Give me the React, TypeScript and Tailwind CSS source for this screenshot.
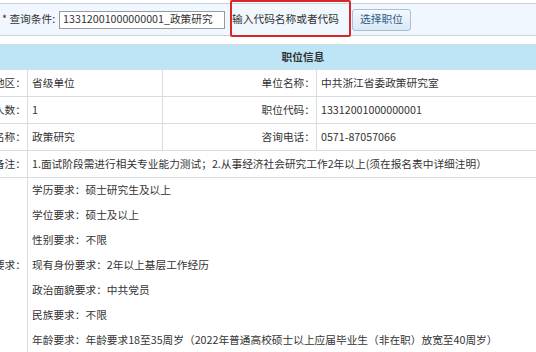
import React from "react"

const font = { fontFamily: '"Noto Sans CJK SC", "Noto Sans", sans-serif' }

const REQUIREMENTS = [
  "学历要求：硕士研究生及以上",
  "学位要求：硕士及以上",
  "性别要求：不限",
  "现有身份要求：2年以上基层工作经历",
  "政治面貌要求：中共党员",
  "民族要求：不限",
  "年龄要求：年龄要求18至35周岁（2022年普通高校硕士以上应届毕业生（非在职）放宽至40周岁）",
]

const ROWS = [
  ["所属地区：", "省级单位", "单位名称：", "中共浙江省委政策研究室"],
  ["招录人数：", "1", "职位代码：", "13312001000000001"],
  ["职位名称：", "政策研究", "咨询电话：", "0571-87057066"],
]

const Label = ({ children }: { children: React.ReactNode }) => (
  <div className="flex items-center justify-end pr-[1px] border-r border-b border-[#d4dce4] text-[#333]">
    {children}
  </div>
)

const Value = ({ children, className = "" }: { children: React.ReactNode; className?: string }) => (
  <div className={`flex items-center pl-[4px] border-r border-b border-[#d4dce4] text-[#333] ${className}`}>
    {children}
  </div>
)

export default function App() {
  return (
    <div className="relative w-[536px] h-[352px] overflow-hidden bg-white text-[10.7px]" style={font}>
      {/* search bar */}
      <div className="mt-[3px] h-[33px] flex items-center border-y border-[#c9d3dc] bg-[#f0f7fe] pl-[2px] text-[#333]">
        <span>* 查询条件:</span>
        <div className="ml-[4px] w-[166px] h-[18px] flex items-center border border-[#9a9a9a] bg-white pl-[3px] text-[#333]">
          13312001000000001_政策研究
        </div>
        <span className="ml-[7px]">输入代码名称或者代码</span>
        <button className="ml-[13px] h-[22px] w-[59px] rounded-[3px] border border-[#a8bfd4] bg-gradient-to-b from-[#f4f9fd] to-[#d9e8f4] text-[#2f5a88]">
          选择职位
        </button>
      </div>

      {/* red annotation box */}
      <div className="absolute left-[230px] top-0 w-[121px] h-[37px] border-[2.5px] border-[#d8262b] rounded-[2px]" />

      {/* table, cropped on the left like the screenshot */}
      <div className="mt-[8px] ml-[-73px] w-[752px] border-t border-l border-[#d4dce4]">
        <div className="h-[25px] flex items-center justify-center bg-[#bee5f6] font-bold text-[#333] border-r border-b border-[#d4dce4]">
          职位信息
        </div>
        <div className="grid grid-cols-[100px_135px_154px_1fr]">
          {ROWS.map((r) => (
            <React.Fragment key={r[0]}>
              <Label>{r[0]}</Label>
              <Value className="h-[27px]">{r[1]}</Value>
              <Label>{r[2]}</Label>
              <Value>{r[3]}</Value>
            </React.Fragment>
          ))}
          <Label>备注：</Label>
          <Value className="col-span-3 h-[27px]">
            1.面试阶段需进行相关专业能力测试；2.从事经济社会研究工作2年以上(须在报名表中详细注明）
          </Value>
          <Label>报考要求：</Label>
          <div className="col-span-3 flex flex-col border-r border-b border-[#d4dce4] text-[#333]">
            {REQUIREMENTS.map((t) => (
              <div key={t} className="h-[25px] flex items-center pl-[4px]">
                {t}
              </div>
            ))}
          </div>
        </div>
      </div>
    </div>
  )
}
